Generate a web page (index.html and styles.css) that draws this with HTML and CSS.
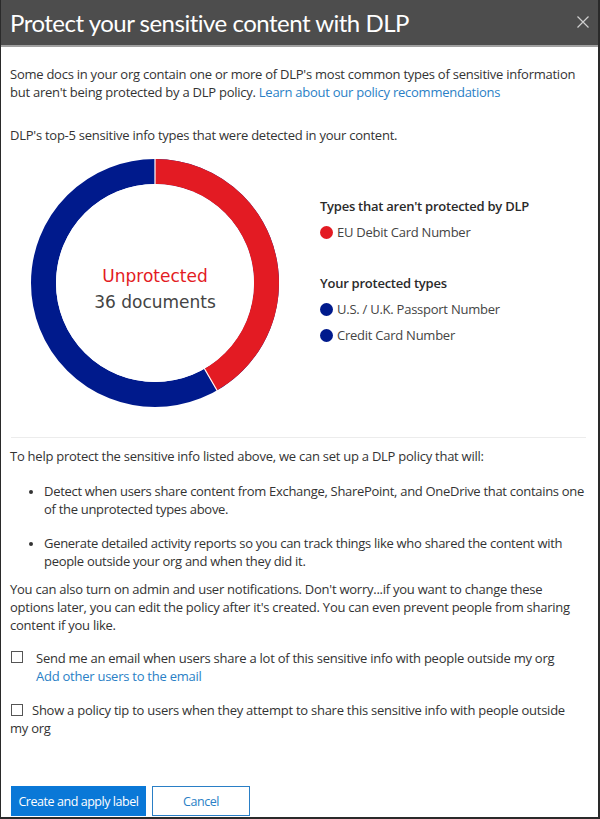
FILE: index.html
```html
<!DOCTYPE html>
<html>
<head>
<meta charset="utf-8">
<link rel="stylesheet" href="styles.css">
</head>
<body>
<div class="panel">
  <header class="head">
    <h1 class="title">Protect your sensitive content with DLP</h1>
    <svg class="close" width="12" height="12" viewBox="0 0 12 12"><path d="M0.5 0.5 L11.5 11.5 M11.5 0.5 L0.5 11.5" stroke="#cfcfcf" stroke-width="1.2"/></svg>
  </header>
  <main class="body">
    <p class="intro">Some docs in your org contain one or more of DLP's most common types of sensitive information but aren't being protected by a DLP policy. <a class="link">Learn about our policy recommendations</a></p>
    <p class="top5">DLP's top-5 sensitive info types that were detected in your content.</p>
    <div class="chart-row">
      <div class="donut">
        <svg width="250" height="250" viewBox="0 0 250 250">
          <circle cx="125" cy="125" r="111.5" fill="none" stroke="#001a8c" stroke-width="25"/>
          <circle cx="125" cy="125" r="111.5" fill="none" stroke="#e31b23" stroke-width="25" stroke-dasharray="291.9 1000" transform="rotate(-90 125 125)"/>
          <line x1="125" y1="0" x2="125" y2="26" stroke="#fff" stroke-width="1.2"/>
          <line x1="125" y1="125" x2="187.5" y2="233.3" stroke="#fff" stroke-width="1.2"/>
          <circle cx="125" cy="125" r="99" fill="#fff"/>
        </svg>
        <div class="donut-label">
          <span class="unprot">Unprotected</span>
          <span class="count">36 documents</span>
        </div>
      </div>
      <div class="legend">
        <div class="legend-group">
          <div class="legend-title">Types that aren't protected by DLP</div>
          <div class="legend-item"><span class="dot red"></span>EU Debit Card Number</div>
        </div>
        <div class="legend-group">
          <div class="legend-title">Your protected types</div>
          <div class="legend-item"><span class="dot blue"></span>U.S. / U.K. Passport Number</div>
          <div class="legend-item"><span class="dot blue"></span>Credit Card Number</div>
        </div>
      </div>
    </div>
    <hr class="divider">
    <p class="help">To help protect the sensitive info listed above, we can set up a DLP policy that will:</p>
    <ul class="bullets">
      <li>Detect when users share content from Exchange, SharePoint, and OneDrive that contains one of the unprotected types above.</li>
      <li>Generate detailed activity reports so you can track things like who shared the content with people outside your org and when they did it.</li>
    </ul>
    <p class="also">You can also turn on admin and user notifications. Don't worry...if you want to change these options later, you can edit the policy after it's created. You can even prevent people from sharing content if you like.</p>
    <div class="check-one">
      <span class="box"></span>
      <div class="check-text">Send me an email when users share a lot of this sensitive info with people outside my org<br><a class="link">Add other users to the email</a></div>
    </div>
    <p class="check-two"><span class="box inline"></span>Show a policy tip to users when they attempt to share this sensitive info with people outside my org</p>
    <div class="actions">
      <button class="btn primary">Create and apply label</button>
      <button class="btn secondary">Cancel</button>
    </div>
  </main>
</div>
</body>
</html>
```
FILE: styles.css
```css
html, body {
  margin: 0;
  padding: 0;
  background: #fff;
}
body {
  font-family: "Open Sans", "Noto Sans", sans-serif;
  color: #333;
}
.panel {
  width: 597px;
  height: 817px;
  border-left: 1px solid #2a2a2a;
  border-right: 2px solid #2a2a2a;
  border-bottom: 2px solid #2a2a2a;
  display: flex;
  flex-direction: column;
  overflow: hidden;
}
.head {
  height: 45px;
  background: #4d4d4d;
  border-bottom: 2px solid #a0a0a0;
  display: flex;
  align-items: center;
  justify-content: space-between;
  padding: 0 9px 0 9px;
  flex-shrink: 0;
}
.title {
  margin: 0;
  font-family: "Lato", sans-serif;
  font-weight: 400;
  font-size: 24px;
  color: #fff;
  letter-spacing: -0.5px;
  line-height: 1;
  margin-top: 1px;
}
.close { margin-top: -2px; }
.body {
  padding: 0 12px 0 9px;
  font-size: 13px;
  line-height: 18px;
  letter-spacing: -0.25px;
}
.intro {
  margin: 18px 0 0;
}
.link { color: #2a7fc6; }
.top5 { margin: 25px 0 0; }
.chart-row {
  display: flex;
  align-items: flex-start;
  margin-top: 14px;
}
.donut {
  position: relative;
  width: 250px;
  height: 250px;
  margin-left: 20px;
}
.donut svg { display: block; }
.donut-label {
  position: absolute;
  inset: 0;
  padding-top: 11px;
  display: flex;
  flex-direction: column;
  align-items: center;
  justify-content: center;
  font-family: "DejaVu Sans", sans-serif;
  font-size: 17px;
  line-height: 26px;
  letter-spacing: 0;
}
.unprot { color: #e31b23; }
.count { color: #444; }
.legend {
  margin-left: 40px;
  margin-top: 39px;
}
.legend-group { margin-bottom: 33px; }
.legend-title {
  color: #2a2a2a;
  font-weight: 600;
  font-size: 13px;
  margin-bottom: 8px;
}
.legend-item {
  display: flex;
  align-items: center;
  color: #444;
  margin-bottom: 8px;
}
.dot {
  width: 13px;
  height: 13px;
  border-radius: 50%;
  margin-right: 4px;
}
.dot.red { background: #e31b23; }
.dot.blue { background: #001a8c; }
.divider {
  border: 0;
  border-top: 1px solid #ececec;
  margin: 29px 0 0 1px;
}
.help { margin: 9px 0 0; }
.bullets {
  margin: 17px 0 0;
  padding-left: 34px;
  letter-spacing: -0.3px;
}
.bullets li { margin-bottom: 16px; }
.bullets li::marker { font-size: 11px; }
.also { margin: -6px 0 0; }
.check-one {
  display: flex;
  margin-top: 15px;
}
.box {
  width: 10px;
  height: 10px;
  border: 1px solid #555;
  flex-shrink: 0;
  margin: 2px 13px 0 1px;
  background: #fff;
}
.box.inline {
  display: inline-block;
  vertical-align: -1px;
  margin: 0 9px 0 1px;
}
.check-two { margin: 16px 0 0; }
.actions {
  margin-top: 49px;
  display: flex;
  gap: 6px;
  padding-left: 1px;
}
.btn {
  height: 30px;
  font-family: "Open Sans", sans-serif;
  font-size: 12.5px;
  letter-spacing: -0.45px;
  white-space: nowrap;
  padding: 0;
}
.primary {
  width: 135px;
  background: #0a78d7;
  color: #fff;
  border: 1px solid #0a78d7;
}
.secondary {
  width: 98px;
  background: #fff;
  color: #2a7fc6;
  border: 1px solid #2a7fc6;
}
```
